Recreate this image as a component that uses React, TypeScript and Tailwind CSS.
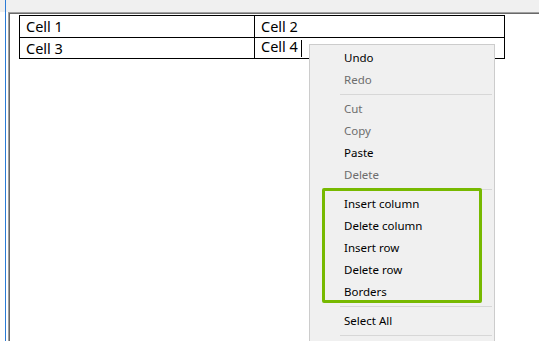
import React from "react";

type MenuEntry = { label: string; disabled?: boolean } | "sep";

const menuEntries: MenuEntry[] = [
  { label: "Undo" },
  { label: "Redo", disabled: true },
  "sep",
  { label: "Cut", disabled: true },
  { label: "Copy", disabled: true },
  { label: "Paste" },
  { label: "Delete", disabled: true },
  "sep",
  { label: "Insert column" },
  { label: "Delete column" },
  { label: "Insert row" },
  { label: "Delete row" },
  { label: "Borders" },
  "sep",
  { label: "Select All" },
  "sep",
];

function ContextMenu() {
  return (
    <div className="absolute left-[309px] top-[44px] w-[186px] h-[320px] overflow-hidden border border-[#cccccc] bg-[#f0f0f0] pt-[2px] font-['Noto_Sans',sans-serif] text-[11.5px]">
      {menuEntries.map((entry, i) =>
        entry === "sep" ? (
          <div key={i} className="h-[7px] flex items-center">
            <div className="ml-[30px] mr-[2px] h-px flex-1 bg-[#d7d7d7]" />
          </div>
        ) : (
          <div
            key={i}
            className={
              entry.disabled
                ? "h-[22px] flex items-center pl-[34px] text-[#6d6d6d]"
                : "h-[22px] flex items-center pl-[34px] text-black"
            }
          >
            {entry.label}
          </div>
        )
      )}
    </div>
  );
}

export default function App() {
  return (
    <div className="relative w-[539px] h-[341px] overflow-hidden bg-white flex">
      {/* left gutter */}
      <div className="w-[5px] flex flex-col">
        <div className="h-[12px] bg-[#f0f0f0]" />
      </div>
      <div className="w-px bg-[#2b7bd6]" />

      <div className="flex-1 flex flex-col">
        <div className="h-[12px] bg-[#f0f0f0]" />
        <div className="flex-1 flex">
          <div className="w-[2px]" />
          <div className="flex-1 border-l border-t border-[#a0a0a0]">
            <div className="h-full border-l border-t border-[#696969] pl-[9px] pt-px">
              <table className="w-[486px] border-collapse font-['Noto_Sans',sans-serif] text-[14.5px] text-black">
                <tbody>
                  <tr className="h-[22px]">
                    <td className="w-[235px] border border-black pl-[6px] py-0 leading-none">Cell 1</td>
                    <td className="border border-black pl-[6px] py-0 leading-none">Cell 2</td>
                  </tr>
                  <tr className="h-[21px]">
                    <td className="border border-black pl-[6px] py-0 leading-none">Cell 3</td>
                    <td className="border border-black pl-[6px] py-0 leading-none">
                      Cell 4
                      <span className="inline-block w-px h-[17px] bg-black ml-[3px] align-middle" />
                    </td>
                  </tr>
                </tbody>
              </table>
            </div>
          </div>
        </div>
      </div>

      <ContextMenu />

      {/* highlight around table commands */}
      <div className="absolute left-[322px] top-[188px] w-[160px] h-[115px] border-[3px] border-[#77b900] rounded-[2px]" />
    </div>
  );
}
